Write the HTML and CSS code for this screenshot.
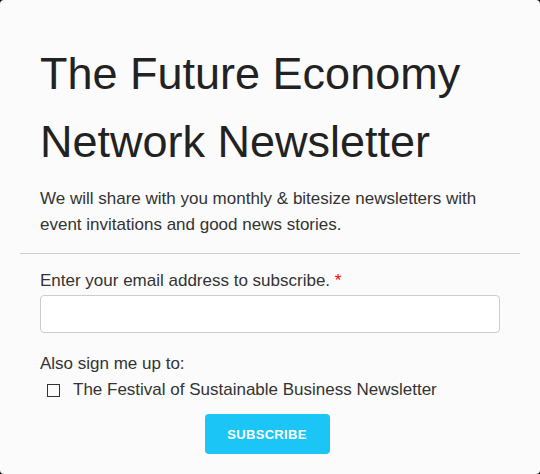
FILE: index.html
```html
<!DOCTYPE html>
<html lang="en">
<head>
<meta charset="utf-8">
<title>The Future Economy Network Newsletter</title>
<link rel="stylesheet" href="styles.css">
</head>
<body>
<div class="card">
  <div class="intro">
    <h1 class="title">The Future Economy Network Newsletter</h1>
    <p class="lead">We will share with you monthly &amp; bitesize newsletters with event invitations and good news stories.</p>
  </div>
  <hr class="divider">
  <form class="form">
    <label class="field-label" for="email">Enter your email address to subscribe. <span class="req">*</span></label>
    <input class="email" id="email" type="email">
    <p class="also">Also sign me up to:</p>
    <label class="check"><span class="box"></span>The Festival of Sustainable Business Newsletter</label>
    <div class="actions"><button type="button" class="btn">SUBSCRIBE</button></div>
  </form>
</div>
</body>
</html>
```
FILE: styles.css
```css
html, body {
  margin: 0;
  padding: 0;
  background: #000;
}
.card {
  box-sizing: border-box;
  width: 540px;
  height: 474px;
  background: #fbfbfb;
  border-radius: 4px;
  padding: 40px 20px 20px;
  font-family: "Liberation Sans", Arial, sans-serif;
  color: #333;
}
.intro {
  padding: 0 20px;
}
.title {
  margin: 0;
  font-size: 45px;
  font-weight: 400;
  line-height: 68px;
  color: #222;
}
.lead {
  margin: 10px 0 0;
  font-size: 17px;
  line-height: 26px;
}
.divider {
  margin: 15px 0 0;
  border: 0;
  border-top: 1px solid #cfcfcf;
  height: 0;
}
.form {
  padding: 14px 20px 0;
  display: flex;
  flex-direction: column;
}
.field-label {
  font-size: 17px;
  line-height: 26px;
}
.req {
  color: #f00;
}
.email {
  box-sizing: border-box;
  margin: 1px 0 0;
  width: 460px;
  height: 38px;
  border: 1px solid #ccc;
  border-radius: 4px;
  background: #fff;
}
.also {
  margin: 18px 0 0;
  font-size: 17px;
  line-height: 26px;
}
.check {
  display: flex;
  align-items: center;
  font-size: 17px;
  line-height: 26px;
}
.box {
  box-sizing: border-box;
  width: 13px;
  height: 13px;
  border: 1px solid #333;
  margin: 0 13px 0 7px;
  flex: none;
}
.actions {
  display: flex;
  justify-content: center;
  margin-top: 11px;
  padding-right: 6px;
}
.btn {
  width: 125px;
  height: 40px;
  border: 0;
  border-radius: 4px;
  background: #1bc5f5;
  color: #fff;
  font-family: "Liberation Sans", Arial, sans-serif;
  font-weight: 700;
  font-size: 13px;
  letter-spacing: 0.3px;
}
```
